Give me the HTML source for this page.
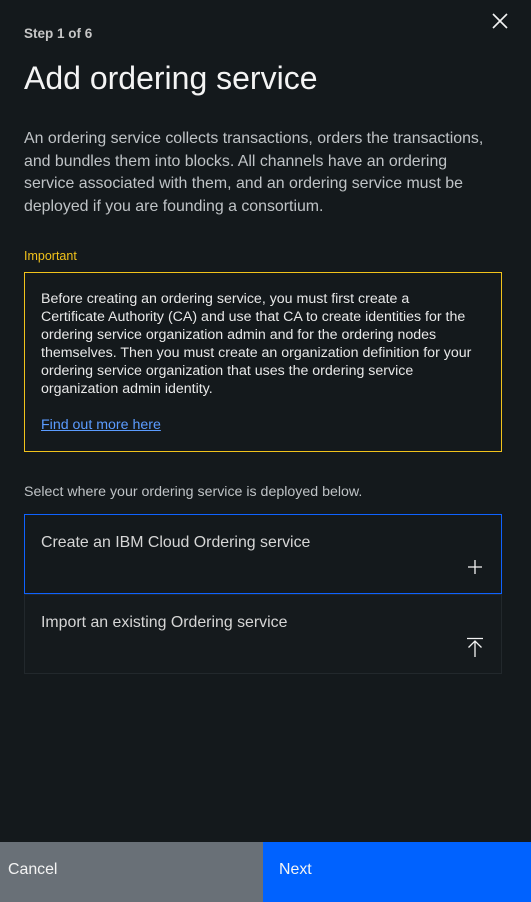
<!DOCTYPE html>
<html><head><meta charset="utf-8"><style>
*{margin:0;padding:0;box-sizing:border-box}
body{width:531px;height:902px;background:#14191c;font-family:"Liberation Sans",sans-serif;position:relative;overflow:hidden;color:#f3f3f3}
.a{position:absolute;white-space:nowrap}
.p{font-size:15.9px;color:#bfc3c6;line-height:22.6px}
.b{font-size:14.2px;color:#e8e8e8;line-height:18px}
</style></head><body>
<svg class="a" style="left:491px;top:12px" width="18" height="18" viewBox="0 0 18 18"><path d="M2 2L16 16M16 2L2 16" stroke="#f3f3f3" stroke-width="1.6"/></svg>
<div class="a" style="left:24px;top:26px;font-size:13.5px;font-weight:bold;color:#c6c6c6">Step 1 of 6</div>
<div class="a" style="left:24px;top:60px;font-size:32px;font-weight:300;color:#f4f4f4">Add ordering service</div>
<div class="a p" style="left:24px;top:128px">An ordering service collects transactions, orders the transactions,<br>and bundles them into blocks. All channels have an ordering<br>service associated with them, and an ordering service must be<br>deployed if you are founding a consortium.</div>
<div class="a" style="left:24px;top:249px;font-size:12.5px;color:#f1c21b">Important</div>
<div class="a" style="left:24px;top:272px;width:478px;height:180px;border:1px solid #f1c21b"></div>
<div class="a b" style="left:41px;top:290px">Before creating an ordering service, you must first create a<br>Certificate Authority (CA) and use that CA to create identities for the<br>ordering service organization admin and for the ordering nodes<br>themselves. Then you must create an organization definition for your<br>ordering service organization that uses the ordering service<br>organization admin identity.</div>
<div class="a" style="left:41px;top:417px;font-size:14.2px;color:#5b9cff;text-decoration:underline">Find out more here</div>
<div class="a" style="left:24px;top:484px;font-size:14.2px;color:#bfc3c6">Select where your ordering service is deployed below.</div>
<div class="a" style="left:24px;top:514px;width:478px;height:80px;border:1px solid #0f62fe"></div>
<div class="a" style="left:41px;top:534px;font-size:15.9px;color:#d6d6d6">Create an IBM Cloud Ordering service</div>
<svg class="a" style="left:468px;top:560px" width="14" height="14" viewBox="0 0 14 14"><path d="M7 0V14M0 7H14" stroke="#f3f3f3" stroke-width="1.3"/></svg>
<div class="a" style="left:24px;top:594px;width:478px;height:80px;border:1px solid #22282c;background:#151a1d"></div>
<div class="a" style="left:41px;top:614px;font-size:15.9px;color:#d6d6d6">Import an existing Ordering service</div>
<svg class="a" style="left:466px;top:637px" width="18" height="20" viewBox="0 0 18 20"><path d="M1 1.5H17M9 4V20M2.5 10.5L9 4L15.5 10.5" stroke="#f3f3f3" stroke-width="1.3" fill="none"/></svg>
<div class="a" style="left:0;top:842px;width:263px;height:60px;background:#697077"></div>
<div class="a" style="left:263px;top:842px;width:268px;height:60px;background:#0062ff"></div>
<div class="a" style="left:8px;top:861px;font-size:15.9px;color:#f4f4f4">Cancel</div>
<div class="a" style="left:279px;top:861px;font-size:15.9px;color:#f4f4f4">Next</div>
</body></html>
